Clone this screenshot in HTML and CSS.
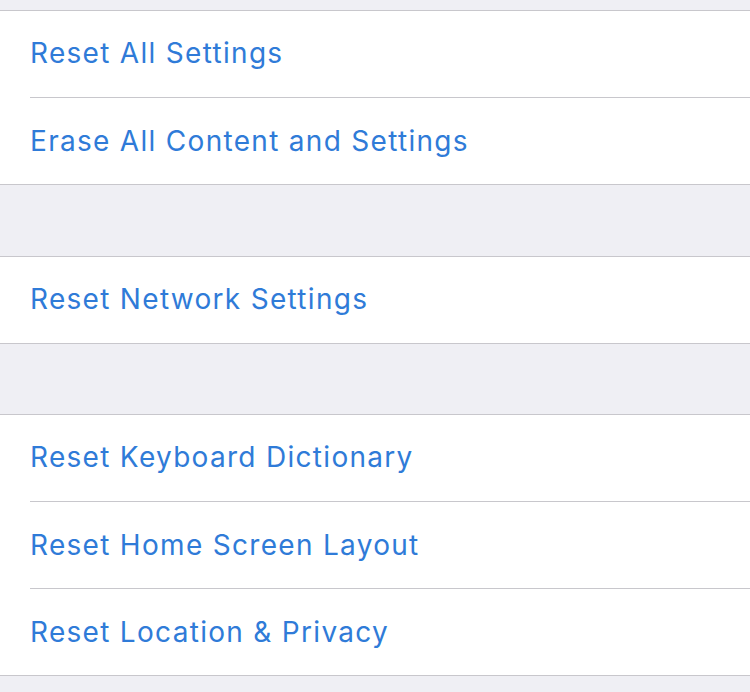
FILE: index.html
```html
<!DOCTYPE html>
<html lang="en">
  <head>
    <meta charset="UTF-8" />
    <meta name="viewport" content="width=device-width, initial-scale=1.0" />
    <title>Reset</title>
    <link rel="stylesheet" href="styles.css">
  </head>
  <body>
    <div class="screen">
      <div class="group first">
        <div class="row">Reset All Settings</div>
        <div class="row">Erase All Content and Settings</div>
      </div>
      <div class="group second">
        <div class="row">Reset Network Settings</div>
      </div>
      <div class="group third">
        <div class="row">Reset Keyboard Dictionary</div>
        <div class="row">Reset Home Screen Layout</div>
        <div class="row">Reset Location &amp; Privacy</div>
      </div>
    </div>
  </body>
</html>
```

FILE: styles.css
```css
body {
  margin: 0;
  background: #efeff4;
  font-family: "Inter", "Roboto", sans-serif;
}
.screen {
  padding-top: 10px;
  display: flex;
  flex-direction: column;
}
.group {
  background: #fff;
  border-top: 1px solid #c8c7cc;
  border-bottom: 1px solid #c8c7cc;
}
.second {
  margin-top: 71px;
}
.third {
  margin-top: 70px;
}
.row {
  height: 86px;
  margin-left: 30px;
  padding-bottom: 2px;
  box-sizing: border-box;
  display: flex;
  align-items: center;
  font-size: 28px;
  color: #2f7bd8;
  letter-spacing: 1.3px;
}
.row + .row {
  height: 87px;
  padding-bottom: 0;
  border-top: 1px solid #c8c7cc;
}
```
